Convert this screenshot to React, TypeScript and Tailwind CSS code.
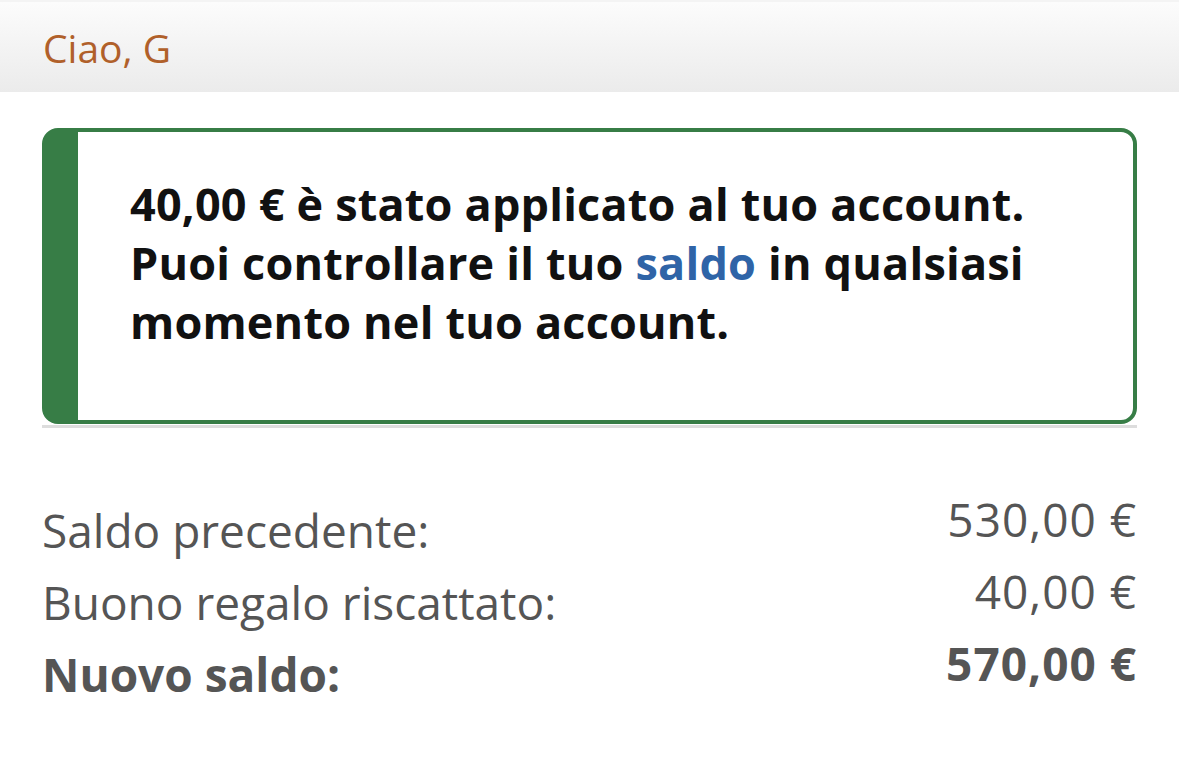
import React from 'react';

const rows = [
  { label: 'Saldo precedente:', value: '530,00 €', bold: false },
  { label: 'Buono regalo riscattato:', value: '40,00 €', bold: false },
  { label: 'Nuovo saldo:', value: '570,00 €', bold: true },
];

const App = () => {
  return (
    <div className="min-h-[761px] w-full bg-white font-['Open_Sans','Liberation_Sans',sans-serif]">
      {/* Greeting bar */}
      <header className="h-[92px] border-t-2 border-[#f4f4f4] bg-gradient-to-b from-[#fcfcfc] to-[#ebebeb] pl-[43px] flex items-center">
        <span className="text-[39px] text-[#b0602a] leading-none">Ciao, G</span>
      </header>

      <main className="px-[42px]">
        {/* Success alert */}
        <div className="mt-[36px] h-[296px] rounded-[16px] border-4 border-l-[36px] border-[#377d46] bg-white pl-[52px] pt-[42px]">
          <p className="text-[45px] font-bold leading-[59px] text-[#111111] tracking-[0.2px]">
            40,00 € è stato applicato al tuo account.
            <br />
            Puoi controllare il tuo <a className="text-[#2f64a7]">saldo</a> in qualsiasi
            <br />
            momento nel tuo account.
          </p>
        </div>
        <div className="mt-px h-[3px] bg-[#dddddd]" />

        {/* Balance summary */}
        <div className="mt-[72px] flex flex-col text-[46px] text-[#555555]">
          {rows.map((row) => (
            <div key={row.label} className={`flex h-[72px] items-start justify-between ${row.bold ? 'font-bold' : ''}`}>
              <span className="leading-[48px] pt-[6px]">{row.label}</span>
              <span className="leading-[48px] -mt-[5px] tracking-[1px]">{row.value}</span>
            </div>
          ))}
        </div>
      </main>
    </div>
  );
};

export default App;
